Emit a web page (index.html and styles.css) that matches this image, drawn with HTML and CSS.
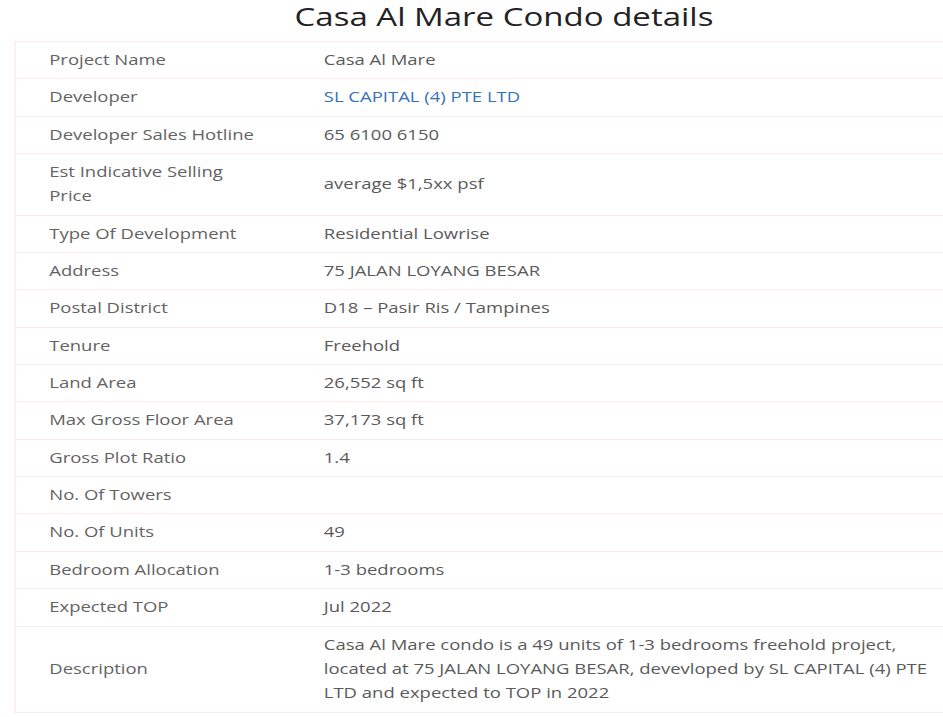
FILE: index.html
```html
<!DOCTYPE html>
<html lang="en">
<head>
    <meta charset="UTF-8">
    <meta name="viewport" content="width=device-width, initial-scale=1.0">
    <title>Casa Al Mare Condo details</title>
    <link rel="stylesheet" href="styles.css">
</head>
<body>
    <div class="page">
        <h2 class="title">Casa Al Mare Condo details</h2>
        <table class="details">
            <tbody>
                <tr><td>Project Name</td><td>Casa Al Mare</td></tr>
                <tr><td>Developer</td><td><a href="#">SL CAPITAL (4) PTE LTD</a></td></tr>
                <tr><td>Developer Sales Hotline</td><td>65 6100 6150</td></tr>
                <tr><td>Est Indicative Selling Price</td><td>average $1,5xx psf</td></tr>
                <tr><td>Type Of Development</td><td>Residential Lowrise</td></tr>
                <tr><td>Address</td><td>75 JALAN LOYANG BESAR</td></tr>
                <tr><td>Postal District</td><td>D18 – Pasir Ris / Tampines</td></tr>
                <tr><td>Tenure</td><td>Freehold</td></tr>
                <tr><td>Land Area</td><td>26,552 sq ft</td></tr>
                <tr><td>Max Gross Floor Area</td><td>37,173 sq ft</td></tr>
                <tr><td>Gross Plot Ratio</td><td>1.4</td></tr>
                <tr><td>No. Of Towers</td><td></td></tr>
                <tr><td>No. Of Units</td><td>49</td></tr>
                <tr><td>Bedroom Allocation</td><td>1-3 bedrooms</td></tr>
                <tr><td>Expected TOP</td><td>Jul 2022</td></tr>
                <tr><td>Description</td><td>Casa Al Mare condo is a 49 units of 1-3 bedrooms freehold project, located at 75 JALAN LOYANG BESAR, devevloped by SL CAPITAL (4) PTE LTD and expected to TOP in 2022</td></tr>
            </tbody>
        </table>
    </div>
</body>
</html>
```

FILE: styles.css
```css
body {
    margin: 0;
    overflow: hidden;
    background: #fff;
    font-family: "Open Sans", Arial, sans-serif;
}

/* the whole page is drawn a bit wider than its type */
.page {
    width: 741px;
    padding-left: 11.3px;
    transform: scaleX(1.32);
    transform-origin: 0 0;
}

.title {
    margin: 0 0 9px;
    font-size: 25px;
    font-weight: 500;
    line-height: 32px;
    color: #222;
    text-align: center;
}

.details {
    width: 741px;
    border-collapse: collapse;
    table-layout: fixed;
    font-size: 14px;
    line-height: 24.35px;
    color: #5a5a5a;
}

.details td {
    border: 1px solid #fce9eb;
    border-left: none;
    border-right: none;
    padding: 6px 10px 6px 25px;
    vertical-align: middle;
}

.details tr td:first-child {
    width: 160px;
    padding-right: 48px;
    border-left: 1px solid #fce9eb;
    color: #636363;
}

.details tr td:last-child {
    padding-left: 0;
    padding-right: 41px;
}

.details a {
    color: #3572b9;
    text-decoration: none;
}
```
